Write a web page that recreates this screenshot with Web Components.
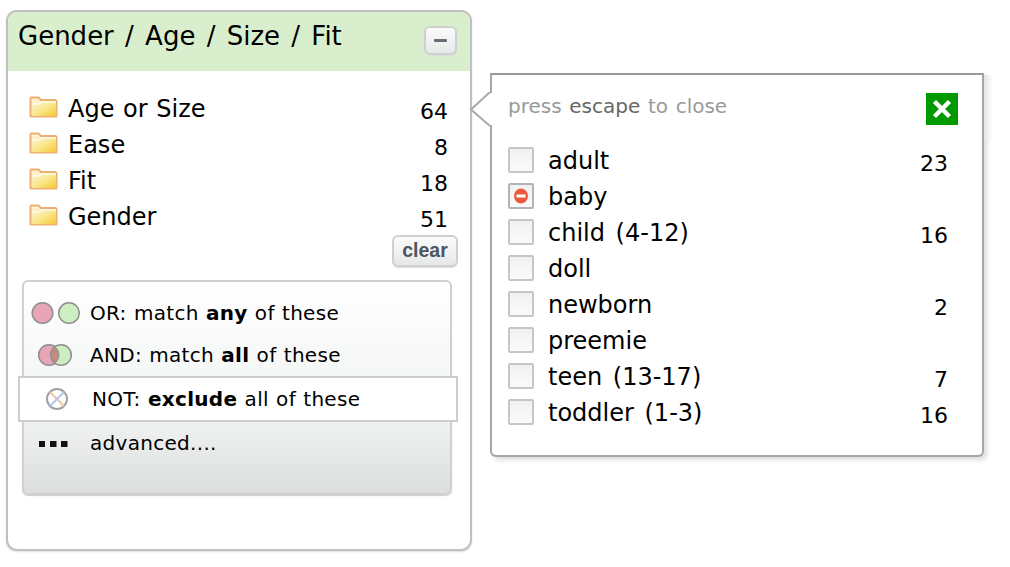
<!DOCTYPE html>
<html><head><meta charset="utf-8"><style>
html,body{margin:0;background:#fff}
body{width:1010px;height:567px;overflow:hidden;position:relative;font-family:"DejaVu Sans",Verdana,sans-serif;color:#000}
</style></head><body>
<facet-panel title-text="Gender / Age / Size / Fit">
  <facet-row label="Age or Size" count="64"></facet-row>
  <facet-row label="Ease" count="8"></facet-row>
  <facet-row label="Fit" count="18"></facet-row>
  <facet-row label="Gender" count="51"></facet-row>
  <mode-menu slot="menu">
    <mode-item icon="or">OR: match <b>any</b> of these</mode-item>
    <mode-item icon="and">AND: match <b>all</b> of these</mode-item>
    <mode-item icon="not" selected>NOT: <b>exclude</b> all of these</mode-item>
    <mode-item icon="more">advanced....</mode-item>
  </mode-menu>
</facet-panel>
<facet-popup>
  <check-row label="adult" count="23"></check-row>
  <check-row label="baby" state="excluded"></check-row>
  <check-row label="child (4-12)" count="16"></check-row>
  <check-row label="doll"></check-row>
  <check-row label="newborn" count="2"></check-row>
  <check-row label="preemie"></check-row>
  <check-row label="teen (13-17)" count="7"></check-row>
  <check-row label="toddler (1-3)" count="16"></check-row>
</facet-popup>
<script>
function def(name, html){
  customElements.define(name, class extends HTMLElement{
    connectedCallback(){
      if(this.shadowRoot) return;
      const r=this.attachShadow({mode:'open'});
      r.innerHTML=typeof html==='function'?html(this):html;
    }
  });
}
const btn=`background:linear-gradient(#fbfbfb,#e6e8e8);border:2px solid #cfd1d1;border-radius:6px;box-sizing:border-box;box-shadow:0 1px 1px #ddd;`;
def('facet-panel',h=>`<style>
:host{display:block;box-sizing:border-box;width:466px;height:541px;margin:10px 0 0 6px;border:2px solid #c0c0c0;border-radius:11px;box-shadow:0 1px 2px #ddd;overflow:hidden;background:#fff}
header{height:59px;background:#d9eecd;display:flex;justify-content:space-between;align-items:flex-start;padding:0 13px 0 10px}
h1{margin:6px 0 0;font:400 26px/36px "DejaVu Sans",Verdana,sans-serif;word-spacing:3px}
.min{margin-top:14px;width:33px;height:29px;${btn}display:flex;align-items:center;justify-content:center}
.min i{display:block;width:13px;height:3px;background:#6a6a72;border-radius:1px}
.rows{padding:20px 22px 0 21px}
.foot{display:flex;justify-content:flex-end;padding:0 12px 0 0;margin-top:0}
.clear{width:66px;height:32px;${btn}font:700 19.500px/27px "Liberation Sans",Arial,sans-serif;color:#4d5560;text-align:center}
.menu{padding:13px 0 0 14px}
</style><header><h1>${h.getAttribute('title-text')}</h1><div class="min"><i></i></div></header>
<div class="rows"><slot></slot></div><div class="foot"><div class="clear">clear</div></div>
<div class="menu"><slot name="menu"></slot></div>`);
const folder=`<svg width="29" height="22" viewBox="0 0 29 22"><defs><linearGradient id="f" x1="0" y1="0" x2="1" y2="1"><stop offset="0" stop-color="#fdf3cc"/><stop offset=".5" stop-color="#fbe68f"/><stop offset="1" stop-color="#f2cb2e"/></linearGradient></defs><path d="M1.500 20.500V2.500q0-1 1-1h7l2.500 2.500h14q1.500 0 1.500 1.500v15z" fill="#fdf0c8" stroke="#ecb070" stroke-width="2" stroke-linejoin="round"/><path d="M3 20V8h8l2-2h14v14z" fill="url(#f)"/><path d="M3 8h8l2-2h14" fill="none" stroke="#fffbe8" stroke-width="1.500"/></svg>`;
def('facet-row',h=>`<style>
:host{display:flex;height:36px;align-items:flex-start;font-size:24px}
svg{flex:none;margin-top:5px}
.l{margin-left:10px;line-height:36px;white-space:nowrap;flex:1;word-spacing:1px}
.c{line-height:36px;margin-top:3px;font-size:22px}
</style>${folder}<span class="l">${h.getAttribute('label')}</span><span class="c">${h.getAttribute('count')||''}</span>`);
def('mode-menu',`<style>
:host{display:block;box-sizing:border-box;width:430px;height:215px;border:2px solid #d0d0d0;border-radius:6px;background:linear-gradient(#fff 0,#f6f7f7 40%,#eeefef 70%,#dcdede 100%);padding-top:10px;box-shadow:0 1px 1px #ccc}
</style><slot></slot>`);
const icons={
or:`<svg width="50" height="24" viewBox="0 0 50 24"><circle cx="12.500" cy="12" r="10.300" fill="#e7a5b6" stroke="#8f8f8f" stroke-width="1.500"/><circle cx="39" cy="12" r="10.300" fill="#cdeec0" stroke="#8f8f8f" stroke-width="1.500"/></svg>`,
and:`<svg width="50" height="24" viewBox="0 0 50 24"><circle cx="19" cy="12" r="10.300" fill="#e7a5b6" stroke="#8f8f8f" stroke-width="1.500"/><circle cx="31" cy="12" r="10.300" fill="#cdeec0" stroke="#8f8f8f" stroke-width="1.500"/><path d="M25 4a10 10 0 0 1 0 16a10 10 0 0 1 0-16z" fill="#bd8e80" stroke="#8f8f8f"/></svg>`,
not:`<svg width="50" height="24" viewBox="0 0 50 24"><circle cx="25" cy="12" r="10" fill="#fff" stroke="#a0a0a0" stroke-width="2"/><path d="M18 5l14 14" stroke="#f0c8a0" stroke-width="2"/><path d="M32 5L18 19" stroke="#b0c8e8" stroke-width="2"/></svg>`,
more:`<svg width="50" height="24" viewBox="0 0 50 24"><g fill="#111"><rect x="9" y="10" width="6" height="6"/><rect x="20" y="10" width="6.500" height="6"/><rect x="31" y="10" width="6.500" height="6"/></g></svg>`};
def('mode-item',h=>{const s=h.hasAttribute('selected');return `<style>
:host{display:flex;align-items:center;height:${s?'46px':'42px'};box-sizing:border-box;font-size:20px;white-space:nowrap;letter-spacing:.3px;word-spacing:.6px;
${s?'margin:0 -8px 0 -6px;background:#fff;border:2px solid #ccc;padding-left:12px;':'padding-left:6px;'}}
svg{flex:none;margin-right:10px}
b{font-weight:700}
</style>${icons[h.getAttribute('icon')]}<span><slot></slot></span>`});
def('facet-popup',`<style>
:host{position:absolute;left:490px;top:73px;width:494px;height:384px;box-sizing:border-box;border:2px solid #a6a6a6;border-top-color:#999;border-radius:0 0 6px 6px;background:#fff;box-shadow:3px 3px 5px #ddd;padding:0 34px 0 16px}
.arrow{position:absolute;left:-22px;top:17px}
.band{position:absolute;left:100%;top:0;width:9px;height:67px;margin-left:2px;background:linear-gradient(90deg,#e4e4e4,#fff)}
.top{display:flex;justify-content:space-between;align-items:center;height:52px;margin:5px -10px 11px 0;font-size:20px;color:#999;word-spacing:1.300px}
.top b{font-weight:400;color:#666}
.x{width:32px;height:32px;background:#090;display:flex;align-items:center;justify-content:center;margin-top:5px}
</style><div class="band"></div><svg class="arrow" width="24" height="36" viewBox="0 0 24 36"><path d="M20 0L1 17.500L20 34" fill="#fff" stroke="#aaa" stroke-width="2"/><rect x="20" y="1" width="4" height="32" fill="#fff"/></svg>
<div class="top"><span>press <b>escape</b> to close</span><div class="x"><svg width="22" height="22" viewBox="0 0 22 22"><path d="M3.500 3.500l15 15M18.500 3.500l-15 15" stroke="#fff" stroke-width="4.500"/></svg></div></div><slot></slot>`);
def('check-row',h=>{const e=h.getAttribute('state')==='excluded';return `<style>
:host{display:flex;height:36px;align-items:flex-start;font-size:24px}
.b{flex:none;box-sizing:border-box;width:26px;height:26px;margin-top:4px;border:2px solid ${e?'#b4b4b4':'#c6c6c6'};border-radius:2px;background:linear-gradient(#f1f1f1,#fafafa);display:flex;align-items:center;justify-content:center}
.l{margin-left:14px;line-height:36px;flex:1;white-space:nowrap;word-spacing:3px}
.c{line-height:36px;margin-top:3px;font-size:22px}
</style><div class="b">${e?'<svg width="16" height="16" viewBox="0 0 16 16"><ellipse cx="8" cy="8" rx="7" ry="7.500" fill="#ea5a3c"/><rect x="3.500" y="6.500" width="9" height="3" fill="#fff"/></svg>':''}</div><span class="l">${h.getAttribute('label')}</span><span class="c">${h.getAttribute('count')||''}</span>`});
</script></body></html>
